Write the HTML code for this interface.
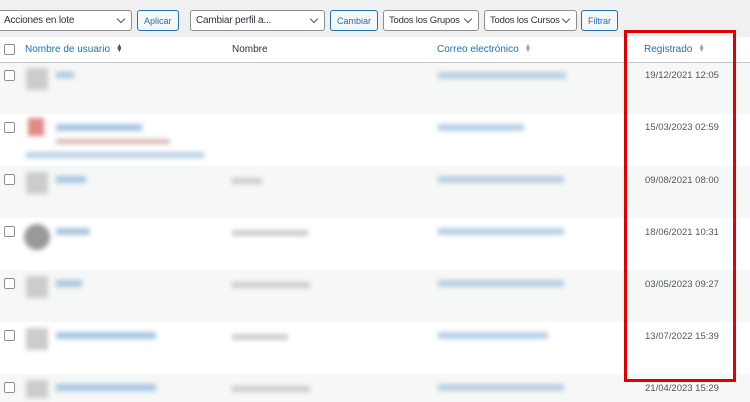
<!DOCTYPE html><html><head><meta charset="utf-8"><style>
*{margin:0;padding:0;box-sizing:border-box}
html,body{width:750px;height:402px;overflow:hidden}
body{background:#f0f0f1;font-family:"Liberation Sans",sans-serif;font-size:10px;color:#3c434a;position:relative}
.a{position:absolute}
.sel{position:absolute;top:10px;height:21px;border:1px solid #8c8f94;border-radius:3px;background:#fff;padding:4px 5px;font-size:10px;color:#2c3338;letter-spacing:-0.2px;white-space:nowrap}
.sel:after{content:"";position:absolute;right:7px;top:5px;width:5px;height:5px;border-right:1.5px solid #50575e;border-bottom:1.5px solid #50575e;transform:rotate(45deg)}
.btn{position:absolute;top:10px;height:21px;border:1px solid #2271b1;border-radius:3px;background:#f6f7f7;color:#2271b1;font-size:9px;padding:5px 6px}
.cb{position:absolute;left:4px;width:11px;height:11px;border:1px solid #8c8f94;border-radius:2px;background:#fff}
.row{position:absolute;left:0;width:750px;height:52px}
.bl{position:absolute;filter:blur(2.5px)}
.h{color:#2271b1;position:absolute;top:44px;font-size:10px}
.d{position:absolute;left:645px;font-size:9.5px;color:#50575e}
.sort{display:inline-block;width:6px;margin-left:3px;font-size:7px;line-height:4px;vertical-align:middle;color:#a7aaad}
</style></head><body>
<div class="sel" style="left:-2px;width:134px">Acciones en lote</div>
<div class="btn" style="left:137px">Aplicar</div>
<div class="sel" style="left:190px;width:135px">Cambiar perfil a...</div>
<div class="btn" style="left:330px">Cambiar</div>
<div class="sel" style="left:383px;width:96px;font-size:9.5px;padding-left:5px">Todos los Grupos</div>
<div class="sel" style="left:484px;width:93px;font-size:9.5px;padding-left:5px">Todos los Cursos</div>
<div class="btn" style="left:581px">Filtrar</div>

<div class="row" style="top:37px;height:26px;background:#fff;border-bottom:1px solid #c3c4c7"></div>
<div class="cb" style="top:44px"></div>
<div class="h" style="left:25px">Nombre de usuario <span class="sort" style="color:#50575e">▲<br>▼</span></div>
<div class="a" style="left:232px;top:44px;color:#2c3338">Nombre</div>
<div class="h" style="left:437px">Correo electrónico <span class="sort">▲<br>▼</span></div>
<div class="h" style="left:644px">Registrado <span class="sort">▲<br>▼</span></div>

<div class="row" style="top:63px;background:#f6f7f7"></div>
<div class="row" style="top:114px;background:#fff"></div>
<div class="row" style="top:166px;background:#f6f7f7"></div>
<div class="row" style="top:218px;background:#fff"></div>
<div class="row" style="top:270px;background:#f6f7f7"></div>
<div class="row" style="top:322px;background:#fff"></div>
<div class="row" style="top:374px;height:28px;background:#f6f7f7"></div>

<div class="cb" style="top:70px"></div><div class="cb" style="top:122px"></div><div class="cb" style="top:174px"></div><div class="cb" style="top:226px"></div><div class="cb" style="top:278px"></div><div class="cb" style="top:330px"></div><div class="cb" style="top:382px"></div>

<div class="bl" style="left:26px;top:68px;width:22px;height:22px;background:#ccc"></div>
<div class="bl" style="left:28px;top:118px;width:16px;height:18px;background:#e08a8a"></div>
<div class="bl" style="left:26px;top:172px;width:22px;height:22px;background:#ccc"></div>
<div class="bl" style="left:24px;top:224px;width:26px;height:26px;border-radius:50%;background:#999"></div>
<div class="bl" style="left:26px;top:276px;width:22px;height:22px;background:#ccc"></div>
<div class="bl" style="left:26px;top:328px;width:22px;height:22px;background:#ccc"></div>
<div class="bl" style="left:26px;top:380px;width:22px;height:18px;background:#ccc"></div>
<div class="bl" style="left:56px;top:72px;width:18px;height:6px;background:#a9c6e0"></div>
<div class="bl" style="left:56px;top:124px;width:86px;height:7px;background:#a9c6e0"></div>
<div class="bl" style="left:56px;top:139px;width:114px;height:5px;background:#d8b8b8"></div>
<div class="bl" style="left:26px;top:152px;width:178px;height:6px;background:#b9d0e4"></div>
<div class="bl" style="left:56px;top:176px;width:30px;height:7px;background:#a9c6e0"></div>
<div class="bl" style="left:56px;top:228px;width:34px;height:7px;background:#a9c6e0"></div>
<div class="bl" style="left:56px;top:280px;width:26px;height:7px;background:#a9c6e0"></div>
<div class="bl" style="left:56px;top:332px;width:100px;height:7px;background:#a9c6e0"></div>
<div class="bl" style="left:56px;top:384px;width:100px;height:7px;background:#a9c6e0"></div>
<div class="bl" style="left:232px;top:178px;width:30px;height:6px;background:#ccc"></div>
<div class="bl" style="left:232px;top:230px;width:76px;height:6px;background:#ccc"></div>
<div class="bl" style="left:232px;top:282px;width:78px;height:6px;background:#ccc"></div>
<div class="bl" style="left:232px;top:334px;width:56px;height:6px;background:#ccc"></div>
<div class="bl" style="left:232px;top:386px;width:78px;height:6px;background:#ccc"></div>
<div class="bl" style="left:438px;top:72px;width:128px;height:7px;background:#b9d0e4"></div>
<div class="bl" style="left:438px;top:124px;width:86px;height:7px;background:#b9d0e4"></div>
<div class="bl" style="left:438px;top:176px;width:126px;height:7px;background:#b9d0e4"></div>
<div class="bl" style="left:438px;top:228px;width:126px;height:7px;background:#b9d0e4"></div>
<div class="bl" style="left:438px;top:280px;width:126px;height:7px;background:#b9d0e4"></div>
<div class="bl" style="left:438px;top:332px;width:110px;height:7px;background:#b9d0e4"></div>
<div class="bl" style="left:438px;top:384px;width:126px;height:7px;background:#b9d0e4"></div>

<div class="d" style="top:70px">19/12/2021 12:05</div>
<div class="d" style="top:122px">15/03/2023 02:59</div>
<div class="d" style="top:175px">09/08/2021 08:00</div>
<div class="d" style="top:227px">18/06/2021 10:31</div>
<div class="d" style="top:279px">03/05/2023 09:27</div>
<div class="d" style="top:331px">13/07/2022 15:39</div>
<div class="d" style="top:383px">21/04/2023 15:29</div>

<div class="a" style="left:624px;top:30px;width:112px;height:352px;border:3px solid #e00000"></div>
</body></html>
